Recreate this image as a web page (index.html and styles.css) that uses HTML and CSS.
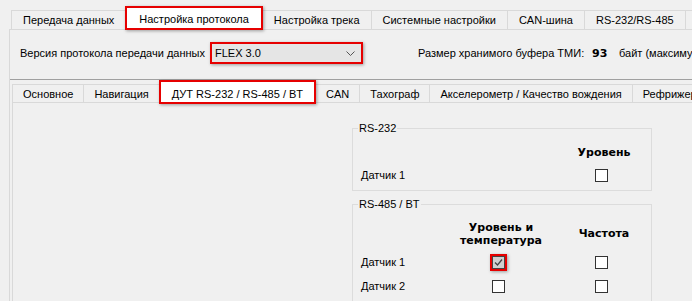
FILE: index.html
```html
<!DOCTYPE html>
<html lang="ru">
<head>
  <meta charset="UTF-8" />
  <title>Настройка протокола</title>
  <link rel="stylesheet" href="styles.css">
</head>
<body>
  <div class="app">
    <div class="tabs">
      <div class="tab">Передача данных</div>
      <div class="tab active">Настройка протокола</div>
      <div class="tab">Настройка трека</div>
      <div class="tab">Системные настройки</div>
      <div class="tab">CAN-шина</div>
      <div class="tab">RS-232/RS-485</div>
      <div class="tab">Прошивка</div>
    </div>
    <div class="panel">
      <div class="proto-row">
        <span class="proto-label">Версия протокола передачи данных</span>
        <div class="combo">
          <span class="combo-value">FLEX 3.0</span>
          <svg class="chevron" width="9" height="5" viewBox="0 0 9 5">
            <polyline points="0.5,0.5 4.5,4.5 8.5,0.5" fill="none" stroke="#555" stroke-width="1" />
          </svg>
        </div>
        <span class="buffer-label">Размер хранимого буфера ТМИ:</span>
        <b class="buffer-value">93</b>
        <span class="buffer-unit">байт (максимум</span>
      </div>

      <div class="inner">
        <div class="subtabs">
          <div class="tab sub">Основное</div>
          <div class="tab sub">Навигация</div>
          <div class="tab sub active">ДУТ RS-232 / RS-485 / BT</div>
          <div class="tab sub">CAN</div>
          <div class="tab sub">Тахограф</div>
          <div class="tab sub">Акселерометр / Качество вождения</div>
          <div class="tab sub">Рефрижератор</div>
        </div>
        <div class="subpanel">
          <div class="groups">
            <fieldset class="group">
              <legend>RS-232</legend>
              <div class="grid">
                <span></span>
                <span></span>
                <span class="col-head">Уровень</span>
                <span class="sensor">Датчик 1</span>
                <span></span>
                <span class="cb"></span>
              </div>
            </fieldset>

            <fieldset class="group second">
              <legend>RS-485 / BT</legend>
              <div class="grid">
                <span></span>
                <span class="col-head">Уровень и<br>температура</span>
                <span class="col-head">Частота</span>

                <span class="sensor">Датчик 1</span>
                <span class="mark">
                  <span class="cb checked">
                    <svg width="11" height="11" viewBox="0 0 11 11">
                      <polyline points="2,5.5 4.5,8 9,2.5" fill="none" stroke="#444" stroke-width="1.3" />
                    </svg>
                  </span>
                </span>
                <span class="cb"></span>

                <span class="sensor">Датчик 2</span>
                <span class="cb"></span>
                <span class="cb"></span>
              </div>
            </fieldset>
          </div>
        </div>
      </div>
    </div>
  </div>
</body>
</html>
```

FILE: styles.css
```css
* {
  box-sizing: border-box;
}

html, body {
  margin: 0;
  width: 692px;
  height: 301px;
  overflow: hidden;
  background: #f0f0f0;
  color: #000;
  font-family: 'Liberation Sans', Arial, sans-serif;
  font-size: 11px;
}

.app {
  padding: 10px 0 0 9px;
  white-space: nowrap;
}

/* tab strips */
.tabs,
.subtabs {
  display: flex;
  align-items: flex-end;
  height: 19px;
  padding-left: 2px;
}

.subtabs {
  height: 22px;
  margin-left: 2px;
  padding-left: 0;
}

.tab {
  flex: none;
  height: 19px;
  padding: 0 11px;
  margin-right: -1px;
  border: 1px solid #d9d9d9;
  border-bottom: 0;
  background: #f0f0f0;
  line-height: 18px;
}

.tab.sub {
  height: 18px;
  padding: 0 10px;
  line-height: 19px;
}

.tab.active {
  position: relative;
  z-index: 1;
  height: 24px;
  margin-bottom: -1px;
  padding: 2px 12px 0;
  border: 2px solid #e60000;
  background: #fff;
  line-height: 19px;
  box-shadow: 1px 1px 3px rgba(0, 0, 0, 0.35);
}

.tab.sub.active {
  height: 24px;
  margin-bottom: -2px;
  padding: 4px 11px 0;
  line-height: 17px;
}

.panel {
  height: 300px;
  border-top: 1px solid #d9d9d9;
  border-left: 1px solid #d9d9d9;
}

/* protocol row */
.proto-row {
  display: flex;
  align-items: center;
  padding: 12px 0 15px 10px;
}

.proto-label {
  width: 185px;
  flex: none;
}

.combo {
  flex: none;
  display: flex;
  align-items: center;
  justify-content: space-between;
  width: 153px;
  height: 22px;
  margin-left: 5px;
  padding: 0 6px 0 3px;
  border: 2px solid #e60000;
  background: #e5e5e5;
  box-shadow: 1px 1px 3px rgba(0, 0, 0, 0.35);
}

.chevron {
  display: block;
}

.buffer-label {
  flex: none;
  width: 174px;
  margin-left: 55px;
}

.buffer-value {
  flex: none;
  width: 27px;
  font-family: 'DejaVu Sans', sans-serif;
  font-size: 11px;
}

/* inner tab control */
.inner {
  border-top: 1px solid #a0a0a0;
}

.subpanel {
  height: 200px;
  margin-left: 2px;
  border-top: 1px solid #d9d9d9;
  border-left: 1px solid #d9d9d9;
}

.groups {
  width: 300px;
  margin-left: 339px;
  padding-top: 18px;
}

.group {
  margin: 0;
  padding: 0 0 6px 0;
  border: 1px solid #dcdcdc;
  min-width: 0;
}

.group.second {
  margin-top: 6px;
}

.group legend {
  margin-left: 5px;
  padding: 0 1px;
  line-height: 14px;
}

.grid {
  display: grid;
  grid-template-columns: 90px 100px 106px;
  row-gap: 7px;
  align-items: center;
  padding: 11px 0 0 8px;
}

.group.second .grid {
  padding-top: 10px;
}

.grid > * {
  min-height: 14px;
}

.col-head {
  font-family: 'DejaVu Sans', sans-serif;
  font-weight: bold;
  font-size: 11px;
  text-align: center;
  line-height: 13px;
}

.sensor {
  line-height: 17px;
}

.cb {
  justify-self: center;
  display: block;
  width: 13px;
  height: 13px;
  min-height: 0;
  margin-right: 5px;
  border: 1px solid #333;
  background: #fff;
}

.cb.checked {
  margin: 0;
  border-color: #444;
  background: #d0d0d0;
}

.cb.checked svg {
  display: block;
}

.mark {
  justify-self: center;
  width: 17px;
  height: 17px;
  margin-right: 5px;
  padding: 0;
  border: 2px solid #e60000;
  box-shadow: 1px 1px 3px rgba(0, 0, 0, 0.35);
}
```
